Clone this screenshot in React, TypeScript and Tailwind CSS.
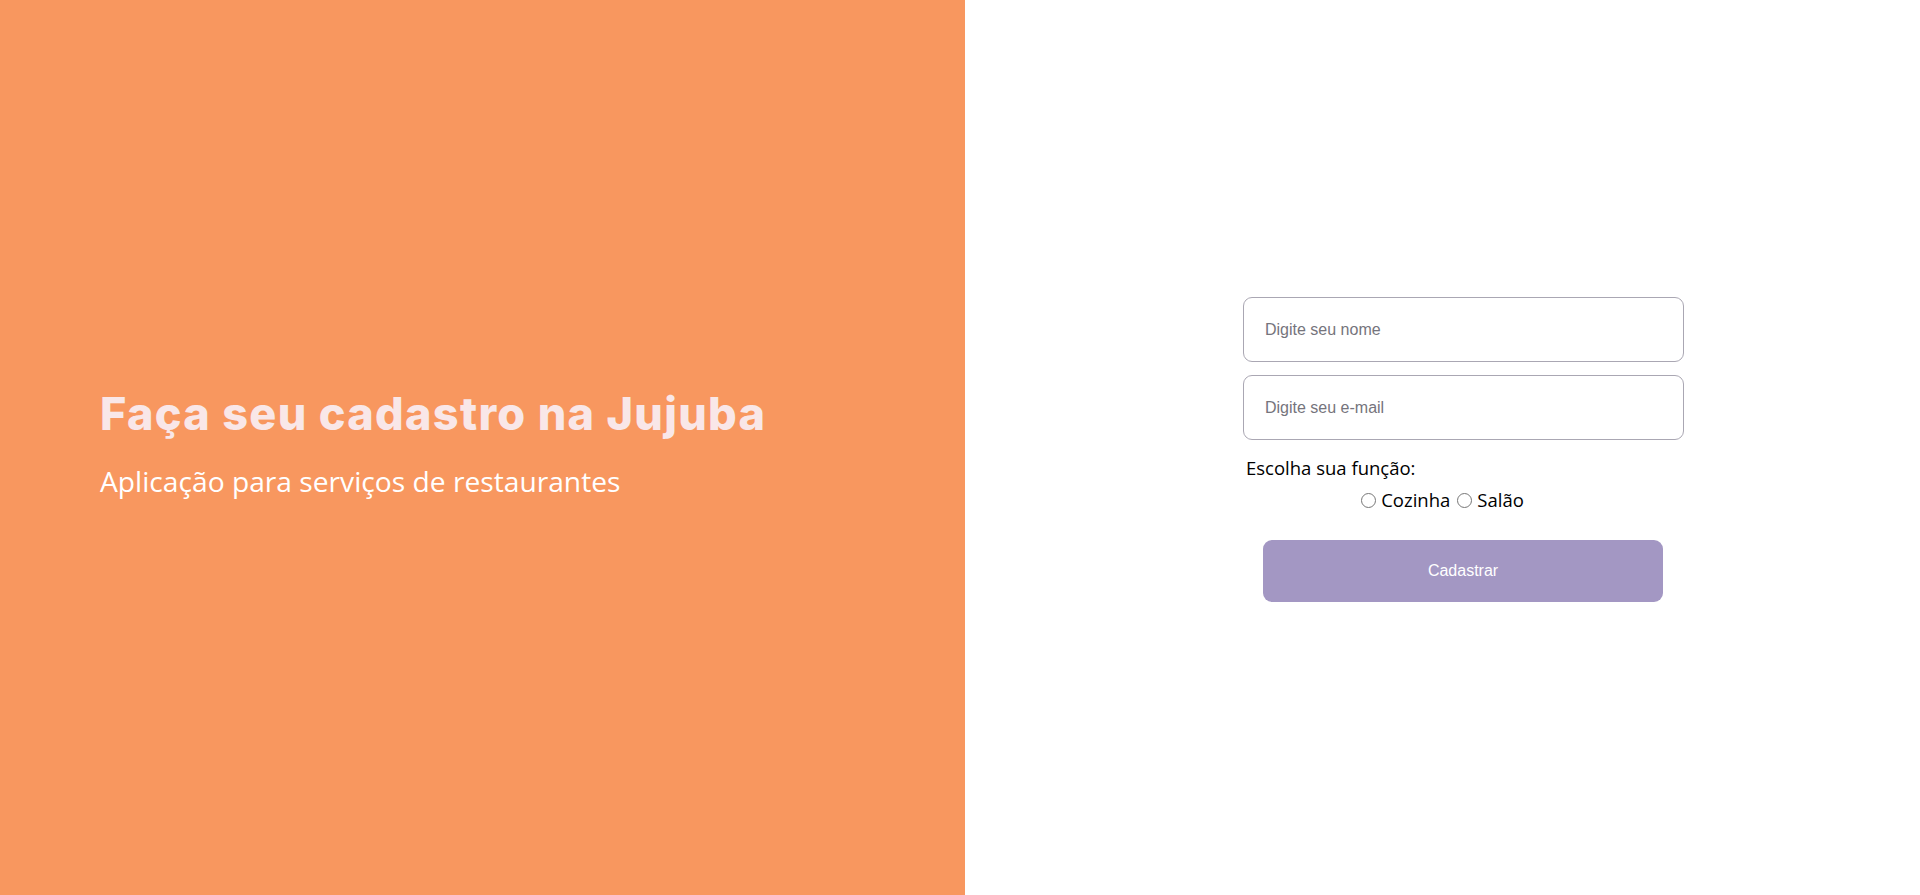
import React from 'react';

export default function App() {
  return (
    <div className="flex h-[895px] w-full">
      <div className="w-[965px] bg-[#F8975F] flex flex-col justify-center pl-[100px] pb-[10px]">
        <h1 className="text-[45px] leading-[56px] font-extrabold text-[#F9E7E8] tracking-[1.3px] font-['Inter',sans-serif]">
          Faça seu cadastro na Jujuba
        </h1>
        <p className="mt-[21px] text-[28.2px] leading-[36px] text-white font-['Open_Sans',sans-serif]">
          Aplicação para serviços de restaurantes
        </p>
      </div>

      <div className="flex-1 bg-white flex flex-col justify-center pt-[4px]">
        <input
          type="text"
          placeholder="Digite seu nome"
          className="ml-[278px] w-[441px] h-[65px] border border-[#aaa7b3] rounded-[9px] pl-[21px] text-[16px] font-['Liberation_Sans',sans-serif] placeholder:text-[#75747c] outline-none"
        />
        <input
          type="email"
          placeholder="Digite seu e-mail"
          className="mt-[13px] ml-[278px] w-[441px] h-[65px] border border-[#aaa7b3] rounded-[9px] pl-[21px] text-[16px] font-['Liberation_Sans',sans-serif] placeholder:text-[#75747c] outline-none"
        />
        <p className="mt-[16px] ml-[281px] text-[18.5px] leading-[24px] text-black font-['Open_Sans',sans-serif]">
          Escolha sua função:
        </p>
        <div className="mt-[8px] flex justify-center items-center gap-[7px] text-[18.5px] leading-[24px] text-black font-['Open_Sans',sans-serif]">
          <label className="flex items-center gap-[5px]">
            <input type="radio" name="funcao" className="w-[15px] h-[15px] m-0" />
            Cozinha
          </label>
          <label className="flex items-center gap-[5px]">
            <input type="radio" name="funcao" className="w-[15px] h-[15px] m-0" />
            Salão
          </label>
        </div>
        <button className="mt-[28px] ml-[298px] w-[400px] h-[62px] rounded-[9px] bg-[#A397C3] text-white text-[16px] font-['Liberation_Sans',sans-serif]">
          Cadastrar
        </button>
      </div>
    </div>
  );
}
